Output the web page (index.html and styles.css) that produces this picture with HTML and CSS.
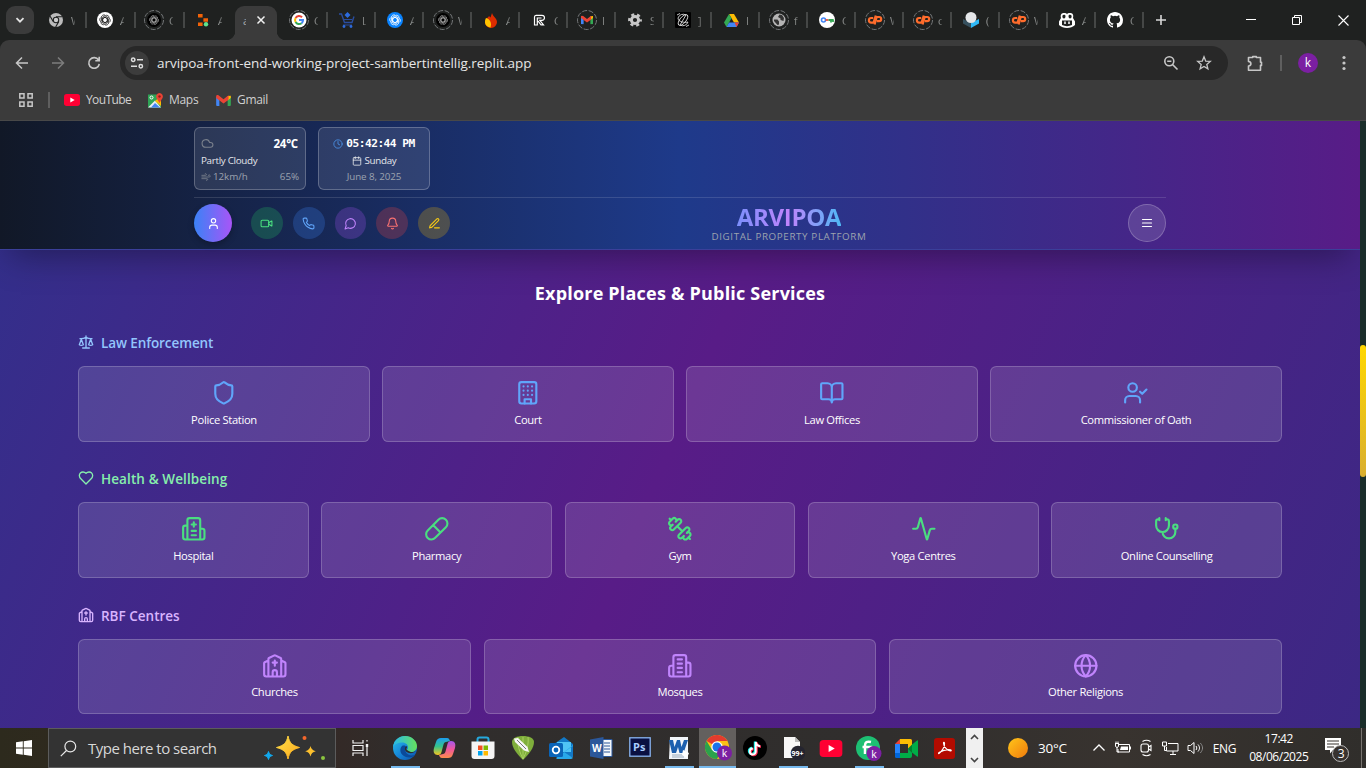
FILE: index.html
```html
<!DOCTYPE html>
<html lang="en">
<head>
<meta charset="utf-8">
<title>ARVIPOA</title>
<link rel="stylesheet" href="styles.css">
</head>
<body>
<svg class="defs" aria-hidden="true">
  <defs>
    <linearGradient id="g-edge" x1="0" y1="0" x2="1" y2="1"><stop offset="0" stop-color="#2cc3e8"/><stop offset=".5" stop-color="#1687d9"/><stop offset="1" stop-color="#0c4fa8"/></linearGradient>
    <linearGradient id="g-edge2" x1="0" y1="0" x2="1" y2="0"><stop offset="0" stop-color="#27b9ec"/><stop offset="1" stop-color="#66e05c"/></linearGradient>
    <linearGradient id="g-cop1" x1="0" y1="0" x2="0" y2="1"><stop offset="0" stop-color="#1c9df0"/><stop offset=".5" stop-color="#35c38b"/><stop offset="1" stop-color="#f6c51f"/></linearGradient>
    <linearGradient id="g-cop2" x1="0" y1="0" x2="0" y2="1"><stop offset="0" stop-color="#a557ee"/><stop offset=".5" stop-color="#f0579a"/><stop offset="1" stop-color="#fb8b4b"/></linearGradient>
    <linearGradient id="g-sun" x1="0" y1="0" x2="1" y2="1"><stop offset="0" stop-color="#ffc61a"/><stop offset="1" stop-color="#f07a0c"/></linearGradient>
    <linearGradient id="g-star" x1="0" y1="0" x2="1" y2="1"><stop offset="0" stop-color="#ffe04a"/><stop offset="1" stop-color="#fba91c"/></linearGradient>
  </defs>
  <symbol id="knot" viewBox="0 0 16 16"><g fill="none" stroke="currentColor" stroke-width=".9"><path id="petal" d="M8 4.900 10.700 6.450V11.200L7.500 13.050A2.900 2.900 0 0 1 3.200 10.600"/><path d="M8 4.900 10.700 6.450V11.200L7.500 13.050A2.900 2.900 0 0 1 3.200 10.600" transform="rotate(60 8 8)"/><path d="M8 4.900 10.700 6.450V11.200L7.500 13.050A2.900 2.900 0 0 1 3.200 10.600" transform="rotate(120 8 8)"/><path d="M8 4.900 10.700 6.450V11.200L7.500 13.050A2.900 2.900 0 0 1 3.200 10.600" transform="rotate(180 8 8)"/><path d="M8 4.900 10.700 6.450V11.200L7.500 13.050A2.900 2.900 0 0 1 3.200 10.600" transform="rotate(240 8 8)"/><path d="M8 4.900 10.700 6.450V11.200L7.500 13.050A2.900 2.900 0 0 1 3.200 10.600" transform="rotate(300 8 8)"/></g></symbol>
  <symbol id="gpt" viewBox="0 0 20 20"><circle cx="10" cy="10" r="9.5" fill="none" stroke="#75787a" stroke-dasharray="5 1.6"/><circle cx="10" cy="10" r="7" fill="#000"/><svg x="4" y="4" width="12" height="12" color="#aaa"><use href="#knot"/></svg></symbol>
  <symbol id="cp" viewBox="0 0 20 20"><circle cx="10" cy="10" r="9.5" fill="none" stroke="#75787a" stroke-dasharray="5 1.6"/><g fill="none" stroke="#ff6c2c" stroke-width="2.2"><path d="M8.200 8H6.200a2.200 2.200 0 0 0 0 4.600H8.600L10.800 5.500"/><path d="M9.600 14.500 11.700 7h2.400a2 2 0 0 1 0 4.200h-2.200"/></g></symbol>
  <symbol id="gmail" viewBox="0 0 16 12"><path d="M0 1.500V11a1 1 0 0 0 1 1h2.500V4.500z" fill="#4285f4"/><path d="M16 1.500V11a1 1 0 0 1-1 1h-2.500V4.500z" fill="#34a853"/><path d="M12.500 1 16 .8V3.400L12.500 6z" fill="#fbbc04"/><path d="M0 1.400C0 .2 1.500-.4 2.500.4L8 4.600 13.500.4v4.800L8 9.300 0 3.400z" fill="#ea4335"/></symbol>
  <symbol id="chrome" viewBox="0 0 24 24"><circle cx="12" cy="12" r="12" fill="#fbc116"/><path d="M12 12 1.600 6A12 12 0 0 1 22.400 6H12z" fill="#e33b2e"/><path d="M1.600 6A12 12 0 0 0 12 24L17 15 7 15z" fill="#2ba24c"/><circle cx="12" cy="12" r="5.700" fill="#fff"/><circle cx="12" cy="12" r="4.500" fill="#1a73e8"/></symbol>
  <symbol id="yt" viewBox="0 0 24 18"><rect width="24" height="18" rx="4" fill="#ff0033"/><path d="M9.500 5.300v7.400L16 9z" fill="#fff"/></symbol>
  <symbol id="building2" viewBox="0 0 24 24"><path d="M6 22V4a2 2 0 0 1 2-2h8a2 2 0 0 1 2 2v18ZM6 12H4a2 2 0 0 0-2 2v6a2 2 0 0 0 2 2h2M18 9h2a2 2 0 0 1 2 2v9a2 2 0 0 1-2 2h-2M10 6h4M10 10h4M10 14h4M10 18h4"/></symbol>
  <symbol id="church" viewBox="0 0 24 24"><path d="M10 9h4M12 7v5M14 22v-4a2 2 0 0 0-4 0v4M18 22V5.618a1 1 0 0 0-.553-.894l-4.553-2.277a2 2 0 0 0-1.788 0L6.553 4.724A1 1 0 0 0 6 5.618V22M18 7l3.447 1.724a1 1 0 0 1 .553.894V20a2 2 0 0 1-2 2H4a2 2 0 0 1-2-2V9.618a1 1 0 0 1 .553-.894L6 7"/></symbol>
</svg>

<div class="tabstrip">
  <div class="tab-search"><svg width="10" height="10" viewBox="0 0 10 10"><path d="M1.500 3.200 5 6.700 8.500 3.200" fill="none" stroke="#e3e3e3" stroke-width="1.800"/></svg></div>
  <div class="tabs early">
    <div class="tab"><svg class="fav" width="14" height="14" viewBox="0 0 16 16"><circle cx="8" cy="8" r="8" fill="#bbb"/><circle cx="8" cy="8" r="3.700" fill="#1f2120"/><circle cx="8" cy="8" r="2.500" fill="#ccc"/><path d="M8 4.300h7M4.800 9.800 1.300 3.800M11.200 9.800 7.600 16" stroke="#1f2120" stroke-width="1.300"/></svg><span>W</span></div>
    <div class="tab"><svg class="fav" width="16" height="16" viewBox="0 0 16 16"><circle cx="8" cy="8" r="8" fill="#fff"/><svg x="1" y="1" width="14" height="14" color="#222"><use href="#knot"/></svg></svg><span>A</span></div>
    <div class="tab"><svg class="fav big" width="20" height="20"><use href="#gpt"/></svg><span>C</span></div>
    <div class="tab last"><svg class="fav" width="12" height="14" viewBox="0 0 12 14"><path fill="#f26207" d="M1 1h4.600v3.600H1zM6.400 5.200H11v3.600H6.400zM1 9.400h4.600V13H1z"/><circle cx="9" cy="11.200" r="2.200" fill="#5fe38d"/></svg><span>A</span></div>
  </div>
  <div class="tab-active"><span>a</span><svg width="10" height="10" viewBox="0 0 10 10"><path d="m1.500 1.500 7 7m0-7-7 7" stroke="#f1f1f1" stroke-width="1.500"/></svg></div>
  <div class="tabs">
    <div class="tab"><svg class="fav big" width="20" height="20" viewBox="0 0 20 20"><circle cx="10" cy="10" r="9.500" fill="none" stroke="#75787a" stroke-dasharray="5 1.600"/><circle cx="10" cy="10" r="7.500" fill="#fff"/><g fill="none" stroke-width="2"><path d="M13 7.200A4 4 0 0 0 6.600 8" stroke="#ea4335"/><path d="M6.600 8a4 4 0 0 0 0 4" stroke="#fbbc05"/><path d="M6.600 12a4 4 0 0 0 6 1.200" stroke="#34a853"/><path d="M12.600 13.200A4 4 0 0 0 14 10h-4" stroke="#4285f4"/></g></svg><span>C</span></div>
    <div class="tab"><svg class="fav" width="16" height="16" viewBox="0 0 16 16"><path d="M0 2h2.500l3 8.500h7.500l2-6" fill="none" stroke="#2a4d9e" stroke-width="1.400"/><path d="m8.500 0 3 3-3 3-3-3z" fill="#2d6bdd"/><path d="M5 7.500h8M4 13h9" stroke="#2a4d9e"/><circle cx="5" cy="14.500" r="1.400" fill="#2d6bdd"/><circle cx="12" cy="14.500" r="1.400" fill="#2d6bdd"/></svg><span>L</span></div>
    <div class="tab"><svg class="fav" width="16" height="16" viewBox="0 0 16 16"><circle cx="8" cy="8" r="8" fill="#0a84ff"/><svg x="1" y="1" width="14" height="14" color="#fff"><use href="#knot"/></svg></svg><span>A</span></div>
    <div class="tab"><svg class="fav big" width="20" height="20"><use href="#gpt"/></svg><span>W</span></div>
    <div class="tab"><svg class="fav" width="12" height="15" viewBox="0 0 12 15"><path d="M7 0c1 4 5 5 5 9a5.800 5.800 0 0 1-12 0C0 6 3 5 4 3l1.500 1.500z" fill="#dd2c00"/><path d="M1 5c4 1 6 5 4.500 9.500A5.500 5.500 0 0 1 0 9.500C0 8 .3 6 1 5z" fill="#ffc400"/></svg><span>A</span></div>
    <div class="tab"><svg class="fav" width="12" height="12" viewBox="0 0 12 12"><path d="M3 1.300h6a2 2 0 0 1 0 5H6.800l3.700 4.600H8L5 7M1.500 3v8h2.800V3.500M1.500 3a1.700 1.700 0 0 1 1.500-1.700M4.500 4h4" fill="none" stroke="#fff" stroke-width="1.200"/></svg><span>C</span></div>
    <div class="tab"><svg class="fav big" width="20" height="20" viewBox="0 0 20 20"><circle cx="10" cy="10" r="9.500" fill="none" stroke="#75787a" stroke-dasharray="5 1.600"/><svg x="4" y="5.500" width="12" height="9"><use href="#gmail"/></svg></svg><span>I</span></div>
    <div class="tab"><svg class="fav" width="14" height="14" viewBox="0 0 14 14"><circle cx="7" cy="7" r="3.600" fill="none" stroke="#c7c7c7" stroke-width="3"/><circle cx="7" cy="7" r="5.700" fill="none" stroke="#c7c7c7" stroke-width="2.400" stroke-dasharray="3 2.970" stroke-dashoffset="1.500"/></svg><span>S</span></div>
    <div class="tab"><svg class="fav" width="16" height="16" viewBox="0 0 16 16"><rect width="16" height="16" rx="1" fill="#000"/><g fill="none" stroke="#ddd" stroke-width=".9"><ellipse cx="8" cy="8" rx="6.600" ry="3" transform="rotate(-50 8 8)"/><path d="M3 6a5.500 5.500 0 0 1 8-3L5 13M13 10a5.500 5.500 0 0 1-8 3M2 3l3-1.500M11 14.500l3-1.500M3 6c0 4 7 5 10 4"/></g></svg><span>]</span></div>
    <div class="tab"><svg class="fav" width="15" height="13" viewBox="0 0 15 13"><path d="M5 0h5l5 8.500h-5z" fill="#fbbc04"/><path d="M5 0 7.500 4.300 2.500 13 0 8.500z" fill="#34a853"/><path d="M5 8.500h10L12.500 13h-10z" fill="#4285f4"/><path d="M10.500 8.500H15L12.500 13z" fill="#ea4335"/></svg><span>I</span></div>
    <div class="tab"><svg class="fav big" width="20" height="20" viewBox="0 0 20 20"><circle cx="10" cy="10" r="9.500" fill="none" stroke="#75787a" stroke-dasharray="5 1.600"/><circle cx="10" cy="10" r="6.500" fill="#b5b5b5"/><path d="M5 9.500h3.500l1.500 2v3L8.500 15 5 11zM10.500 4.500 9 7l2.500 1.500V10l3 1 .5-3-2-3z" fill="#333"/></svg><span>f</span></div>
    <div class="tab"><svg class="fav" width="16" height="16" viewBox="0 0 16 16"><circle cx="8" cy="8" r="8" fill="#fff"/><circle cx="4.500" cy="8" r="2" fill="none" stroke="#4285f4" stroke-width="1.600"/><path d="M6.500 8h3" stroke="#ea4335" stroke-width="1.700"/><path d="M9.500 8H14M12 8v2.500M14 7.300V10" stroke="#34a853" stroke-width="1.800"/></svg><span>C</span></div>
    <div class="tab"><svg class="fav big" width="20" height="20"><use href="#cp"/></svg><span>W</span></div>
    <div class="tab"><svg class="fav big" width="20" height="20"><use href="#cp"/></svg><span>c</span></div>
    <div class="tab"><svg class="fav" width="16" height="16" viewBox="0 0 16 16"><path d="m0 7 8 4v5l-8-4.500z" fill="#36505e"/><path d="m16 7-8 4v5l8-4.500z" fill="#2fb9f7"/><circle cx="8" cy="5.500" r="5.500" fill="#e4e6e8"/></svg><span>(</span></div>
    <div class="tab"><svg class="fav big" width="20" height="20"><use href="#cp"/></svg><span>W</span></div>
    <div class="tab"><svg class="fav" width="16" height="15" viewBox="0 0 16 15"><path d="M2 5C1 1 3 0 5 0s3 .5 3 1.500C8 .5 9 0 11 0s4 1 3 5l2 3.500V12c-2 2-5 3-8 3s-6-1-8-3V8.500z" fill="#fff"/><path d="M3.500 2.500C4 1.500 6.500 1.500 6.500 3S6 5.500 5 5.500 3 4.500 3.500 2.500zM12.500 2.500C12 1.500 9.500 1.500 9.500 3S10 5.500 11 5.500s2-1 1.500-3zM3 7.500h10v4.500c-3 1.500-7 1.500-10 0z" fill="#1f2120"/><path d="M6 8.500v2.500M10 8.500v2.500" stroke="#fff" stroke-width="1.500"/></svg><span>A</span></div>
    <div class="tab"><svg class="fav" width="16" height="16" viewBox="0 0 16 16"><path fill="#fff" d="M8 0C3.580 0 0 3.580 0 8c0 3.540 2.290 6.530 5.470 7.590.4.070.55-.17.55-.38 0-.19-.01-.82-.01-1.490-2.010.37-2.530-.49-2.690-.94-.09-.23-.48-.94-.82-1.130-.28-.15-.68-.52-.01-.53.63-.01 1.080.58 1.230.82.72 1.210 1.870.87 2.330.66.070-.52.280-.87.510-1.070-1.780-.2-3.640-.89-3.640-3.950 0-.87.310-1.590.82-2.150-.08-.2-.36-1.020.08-2.120 0 0 .67-.21 2.200.82a7.400 7.400 0 0 1 4 0c1.530-1.040 2.200-.82 2.200-.82.44 1.100.16 1.920.08 2.120.51.56.82 1.270.82 2.150 0 3.070-1.870 3.750-3.650 3.950.29.25.54.73.54 1.480 0 1.070-.01 1.930-.01 2.200 0 .21.15.46.55.38A8.010 8.010 0 0 0 16 8c0-4.420-3.580-8-8-8z"/></svg><span>C</span></div>
  </div>
  <div class="newtab"><svg width="12" height="12" viewBox="0 0 12 12"><path d="M6 1v10M1 6h10" stroke="#d8d8d8" stroke-width="1.600"/></svg></div>
  <div class="wincontrols">
    <svg width="10" height="10" viewBox="0 0 10 10"><path d="M0 4.500h10" stroke="#fff"/></svg>
    <svg width="10" height="10" viewBox="0 0 10 10"><path d="M.5 2.500h7v7h-7zM2.500 2.500v-2h7v7h-2" fill="none" stroke="#fff"/></svg>
    <svg width="11" height="11" viewBox="0 0 11 11"><path d="m.5.5 10 10m0-10-10 10" stroke="#fff" stroke-width="1.100"/></svg>
  </div>
</div>

<div class="chrome-body">
  <div class="toolbar">
    <svg class="nav" width="14" height="14" viewBox="0 0 14 14"><path d="M7 1.500 1.500 7 7 12.500M1.500 7H13" fill="none" stroke="#c7c7c7" stroke-width="1.500"/></svg>
    <svg class="nav" width="14" height="14" viewBox="0 0 14 14"><path d="M7 1.500 12.500 7 7 12.500M12.500 7H1" fill="none" stroke="#7d7d7d" stroke-width="1.500"/></svg>
    <svg class="nav" width="14" height="14" viewBox="0 0 14 14"><path d="M11.500 4A5.300 5.300 0 1 0 12.300 8M12.200.8v4H8.300" fill="none" stroke="#c7c7c7" stroke-width="1.600"/></svg>
    <div class="omnibox">
      <div class="siteinfo"><svg width="14" height="14" viewBox="0 0 14 14"><g fill="none" stroke="#dedede" stroke-width="1.500"><circle cx="3.200" cy="3.700" r="1.700"/><path d="M7 3.700h6M1 10.300h6"/><circle cx="10.800" cy="10.300" r="1.700"/></g></svg></div>
      <span class="url">arvipoa-front-end-working-project-sambertintellig.replit.app</span>
      <svg class="zoomicon" width="16" height="16" viewBox="0 0 16 16"><g fill="none" stroke="#c7c7c7" stroke-width="1.600"><circle cx="6.300" cy="6.200" r="4.500"/><path d="m9.500 9.500 5 5M4.200 6.200h4.200"/></g></svg>
      <svg width="16" height="16" viewBox="0 0 16 16"><path d="m8 1.800 1.700 4.300 4.600.3-3.500 3 1.100 4.500L8 11.500l-3.900 2.400 1.100-4.500-3.500-3 4.600-.3z" fill="none" stroke="#c7c7c7" stroke-width="1.300"/></svg>
    </div>
    <svg class="ext" width="18" height="18" viewBox="0 0 18 18"><path d="M2.500 3.500h4.200V2.600h3.600v.9h4.200v4.700h1v3.200h-1v4.800h-12v-4.100c3.200-.5 3.200-4.200 0-4.700z" fill="none" stroke="#c7c7c7" stroke-width="1.600" stroke-linejoin="round"/></svg>
    <i class="tsep"></i>
    <span class="profile">k</span>
    <svg class="dots" width="4" height="16" viewBox="0 0 4 16"><g fill="#c7c7c7"><circle cx="2" cy="2.500" r="1.600"/><circle cx="2" cy="8" r="1.600"/><circle cx="2" cy="13.500" r="1.600"/></g></svg>
  </div>
  <div class="bookmarks">
    <svg width="14" height="14" viewBox="0 0 14 14"><path d="M.8.800h4.200v4.200H.8zM9 .800h4.200v4.200H9zM.8 9h4.200v4.200H.8zM9 9h4.200v4.200H9z" fill="none" stroke="#c7c7c7" stroke-width="1.500"/></svg>
    <i></i>
    <svg width="16" height="12"><use href="#yt"/></svg><span class="b1">YouTube</span>
    <svg width="15" height="15" viewBox="0 0 15 15"><rect y="1.500" width="13" height="13" fill="#2fa456"/><path d="m0 14.500 7-7 6 7z" fill="#e9edf3"/><path d="m3 14.500 4-4.500 5 4.500z" fill="#4285f4"/><path d="m7 8 6-5v10z" fill="#fbbc04"/><circle cx="3.500" cy="4.500" r="1.500" fill="none" stroke="#fff"/><path d="M11.500 0a3.500 3.500 0 0 1 3 5l-3 5-3-5a3.500 3.500 0 0 1 3-5z" fill="#ea4335"/><circle cx="11.500" cy="3.500" r="1.200" fill="#8c1d18"/></svg><span class="b2">Maps</span>
    <svg width="15" height="11"><use href="#gmail"/></svg><span class="b3">Gmail</span>
  </div>
</div>

<main class="viewport">
  <div class="app">
    <header class="app-header">
      <div class="header-inner">
        <div class="info-row">
          <div class="info weather">
            <div class="line"><svg class="lu dim" width="13" height="13" viewBox="0 0 24 24"><path d="M17.500 19H9a7 7 0 1 1 6.710-9h1.790a4.500 4.500 0 1 1 0 9Z"/></svg><b>24°C</b></div>
            <div class="line pc">Partly Cloudy</div>
            <div class="line dimtext"><span class="wind"><svg class="lu" width="10" height="10" viewBox="0 0 24 24"><path d="M12.800 19.600A2 2 0 1 0 14 16H2M17.500 8a2.500 2.500 0 1 1 2 4H2M9.800 4.400A2 2 0 1 1 11 8H2"/></svg>12km/h</span><span>65%</span></div>
          </div>
          <div class="info clock">
            <div class="line time"><svg class="lu blue" width="10" height="10" viewBox="0 0 24 24"><circle cx="12" cy="12" r="10"/><path d="M12 6v6l4 2"/></svg><b>05:42:44 PM</b></div>
            <div class="line day"><svg class="lu" width="10" height="10" viewBox="0 0 24 24"><path d="M8 2v4M16 2v4M3 10h18"/><rect x="3" y="4" width="18" height="18" rx="2"/></svg>Sunday</div>
            <div class="line dimtext date">June 8, 2025</div>
          </div>
        </div>
        <div class="main-row">
          <div class="actions">
            <span class="round avatar"><svg class="lu" width="13" height="13" viewBox="0 0 24 24"><path d="M19 21v-2a4 4 0 0 0-4-4H9a4 4 0 0 0-4 4v2"/><circle cx="12" cy="7" r="4"/></svg></span>
            <span class="round act green"><svg class="lu" width="13" height="13" viewBox="0 0 24 24"><path d="m16 13 5.223 3.482a.5.5 0 0 0 .777-.416V7.870a.5.5 0 0 0-.752-.432L16 10.500"/><rect x="2" y="6" width="14" height="12" rx="2"/></svg></span>
            <span class="round act blue"><svg class="lu" width="13" height="13" viewBox="0 0 24 24"><path d="M22 16.920v3a2 2 0 0 1-2.180 2 19.790 19.790 0 0 1-8.630-3.070 19.500 19.500 0 0 1-6-6 19.790 19.790 0 0 1-3.070-8.670A2 2 0 0 1 4.110 2h3a2 2 0 0 1 2 1.720c.13.960.36 1.900.7 2.810a2 2 0 0 1-.45 2.110L8.090 9.910a16 16 0 0 0 6 6l1.270-1.270a2 2 0 0 1 2.110-.45c.91.34 1.850.57 2.810.7A2 2 0 0 1 22 16.920z"/></svg></span>
            <span class="round act purple"><svg class="lu" width="13" height="13" viewBox="0 0 24 24"><path d="M7.900 20A9 9 0 1 0 4 16.100L2 22Z"/></svg></span>
            <span class="round act red"><svg class="lu" width="13" height="13" viewBox="0 0 24 24"><path d="M10.268 21a2 2 0 0 0 3.464 0M3.262 15.326A1 1 0 0 0 4 17h16a1 1 0 0 0 .74-1.673C19.410 13.956 18 12.499 18 8A6 6 0 0 0 6 8c0 4.499-1.411 5.956-2.738 7.326"/></svg></span>
            <span class="round act yellow"><svg class="lu" width="13" height="13" viewBox="0 0 24 24"><path d="M12 20h9M16.376 3.622a1 1 0 0 1 3.002 3.002L7.368 18.635a2 2 0 0 1-.855.506l-2.872.838a.5.5 0 0 1-.62-.62l.838-2.872a2 2 0 0 1 .506-.854z"/></svg></span>
          </div>
          <div class="brand"><h1>ARVIPOA</h1><p>DIGITAL PROPERTY PLATFORM</p></div>
          <span class="round menu"><svg class="lu" width="12" height="10" viewBox="0 0 12 10"><path d="M1.500 1.500h9M1.500 5h9M1.500 8.500h9" stroke-width="1.200"/></svg></span>
        </div>
      </div>
    </header>

    <div class="content">
      <h2>Explore Places &amp; Public Services</h2>

      <section class="law">
        <h3><svg class="lu" width="16" height="16" viewBox="0 0 24 24"><path d="m16 16 3-8 3 8c-.87.65-1.920 1-3 1s-2.130-.35-3-1ZM2 16l3-8 3 8c-.87.65-1.920 1-3 1s-2.130-.35-3-1ZM7 21h10M12 3v18M3 7h2c2 0 5-1 7-2 2 1 5 2 7 2h2"/></svg><span>Law Enforcement</span></h3>
        <div class="cards four">
          <div class="card"><svg class="lu" viewBox="0 0 24 24"><path d="M20 13c0 5-3.500 7.500-7.660 8.950a1 1 0 0 1-.67-.01C7.500 20.500 4 18 4 13V6a1 1 0 0 1 1-1c2 0 4.500-1.200 6.240-2.720a1.170 1.170 0 0 1 1.520 0C14.510 3.810 17 5 19 5a1 1 0 0 1 1 1z"/></svg><span>Police Station</span></div>
          <div class="card"><svg class="lu" viewBox="0 0 24 24"><rect x="4" y="2" width="16" height="20" rx="2"/><path d="M9 22v-4h6v4M8 6h.01M16 6h.01M12 6h.01M12 10h.01M12 14h.01M16 10h.01M16 14h.01M8 10h.01M8 14h.01"/></svg><span>Court</span></div>
          <div class="card"><svg class="lu" viewBox="0 0 24 24"><path d="M12 7v14M3 18a1 1 0 0 1-1-1V4a1 1 0 0 1 1-1h5a4 4 0 0 1 4 4 4 4 0 0 1 4-4h5a1 1 0 0 1 1 1v13a1 1 0 0 1-1 1h-6a3 3 0 0 0-3 3 3 3 0 0 0-3-3z"/></svg><span>Law Offices</span></div>
          <div class="card"><svg class="lu" viewBox="0 0 24 24"><path d="M16 21v-2a4 4 0 0 0-4-4H6a4 4 0 0 0-4 4v2M16 11l2 2 4-4"/><circle cx="9" cy="7" r="4"/></svg><span>Commissioner of Oath</span></div>
        </div>
      </section>

      <section class="health">
        <h3><svg class="lu" width="16" height="16" viewBox="0 0 24 24"><path d="M19 14c1.490-1.460 3-3.210 3-5.500A5.500 5.500 0 0 0 16.500 3c-1.760 0-3 .5-4.500 2-1.500-1.500-2.740-2-4.500-2A5.500 5.500 0 0 0 2 8.500c0 2.300 1.500 4.050 3 5.500l7 7Z"/></svg><span>Health &amp; Wellbeing</span></h3>
        <div class="cards five">
          <div class="card"><svg class="lu" viewBox="0 0 24 24"><path d="M12 6v4M14 14h-4M14 18h-4M14 8h-4M18 12h2a2 2 0 0 1 2 2v6a2 2 0 0 1-2 2H4a2 2 0 0 1-2-2v-9a2 2 0 0 1 2-2h2M18 22V4a2 2 0 0 0-2-2H8a2 2 0 0 0-2 2v18"/></svg><span>Hospital</span></div>
          <div class="card"><svg class="lu" viewBox="0 0 24 24"><path d="m10.500 20.500 10-10a4.950 4.950 0 1 0-7-7l-10 10a4.950 4.950 0 1 0 7 7ZM8.500 8.500l7 7"/></svg><span>Pharmacy</span></div>
          <div class="card"><svg class="lu" viewBox="0 0 24 24"><path d="M14.400 14.400 9.600 9.600M18.657 21.485a2 2 0 1 1-2.829-2.828l-1.767 1.768a2 2 0 1 1-2.829-2.829l6.364-6.364a2 2 0 1 1 2.829 2.829l-1.768 1.767a2 2 0 1 1 2.828 2.829zM21.500 21.500l-1.400-1.400M3.900 3.900 2.500 2.500M6.404 12.768a2 2 0 1 1-2.829-2.829l1.768-1.767a2 2 0 1 1-2.828-2.829l2.828-2.828a2 2 0 1 1 2.829 2.828l1.767-1.768a2 2 0 1 1 2.829 2.829z"/></svg><span>Gym</span></div>
          <div class="card"><svg class="lu" viewBox="0 0 24 24"><path d="M22 12h-2.480a2 2 0 0 0-1.930 1.460l-2.350 8.360a.25.25 0 0 1-.48 0L9.240 2.180a.25.25 0 0 0-.48 0l-2.350 8.360A2 2 0 0 1 4.490 12H2"/></svg><span>Yoga Centres</span></div>
          <div class="card"><svg class="lu" viewBox="0 0 24 24"><path d="M11 2v2M5 2v2M5 3H4a2 2 0 0 0-2 2v4a6 6 0 0 0 12 0V5a2 2 0 0 0-2-2h-1M8 15a6 6 0 0 0 12 0v-3"/><circle cx="20" cy="10" r="2"/></svg><span>Online Counselling</span></div>
        </div>
      </section>

      <section class="rbf">
        <h3><svg class="lu" width="16" height="16"><use href="#church"/></svg><span>RBF Centres</span></h3>
        <div class="cards three">
          <div class="card"><svg class="lu"><use href="#church"/></svg><span>Churches</span></div>
          <div class="card"><svg class="lu"><use href="#building2"/></svg><span>Mosques</span></div>
          <div class="card"><svg class="lu" viewBox="0 0 24 24"><circle cx="12" cy="12" r="10"/><path d="M12 2a14.500 14.500 0 0 0 0 20 14.500 14.500 0 0 0 0-20M2 12h20"/></svg><span>Other Religions</span></div>
        </div>
      </section>
    </div>
  </div>
  <div class="scrollbar"><i></i></div>
</main>

<footer class="taskbar">
  <div class="start"><svg width="16" height="16" viewBox="0 0 16 16"><path d="M0 2.200 6.800 1.300V7.600H0zM7.700 1.200 16 0v7.600H7.700zM0 8.400h6.800v6.300L0 13.800zM7.700 8.400H16V16l-8.300-1.200z" fill="#fff"/></svg></div>
  <div class="search"><svg width="17" height="17" viewBox="0 0 17 17"><circle cx="10.300" cy="6.500" r="5.400" fill="none" stroke="#e8e8e8" stroke-width="1.200"/><path d="M6.500 10.500.8 16.200" stroke="#e8e8e8" stroke-width="1.200"/></svg><span>Type here to search</span>
    <svg class="sparkles" width="62" height="26" viewBox="0 0 62 26"><path d="M24 1c1.500 7 4 9.500 11.500 11.500C28 14.500 25.500 17 24 24c-1.500-7-4-9.500-11.500-11.500C20 10.500 22.500 8 24 1z" fill="url(#g-star)" stroke="url(#g-star)" stroke-linejoin="round"/><path d="M46.500 11c.8 3 2 4.200 5.300 5.200-3.300 1-4.500 2.200-5.300 5.300-.8-3.100-2-4.300-5.300-5.300 3.300-1 4.500-2.200 5.300-5.200z" fill="#fcc02e"/><path d="M4.500 16.500c.7 2.500 1.500 3.300 4 4-2.500.7-3.300 1.500-4 4-.7-2.500-1.500-3.300-4-4 2.500-.7 3.300-1.500 4-4z" fill="#11a9ee" stroke="#11a9ee"/><circle cx="40.500" cy="3" r="2" fill="#f4672c"/><circle cx="59" cy="23" r="2" fill="#8bc53f"/></svg></div>
  <div class="taskview"><svg width="17" height="16" viewBox="0 0 17 16"><g fill="none" stroke="#f0f0f0" stroke-width="1.200"><path d="M1 0v3h10V0M1 16v-3h10v3M1 5.500h10v5H1zM15 4.500V16M15 0v1.500"/></g><rect x="13.800" y="4" width="2.400" height="3" fill="#f0f0f0"/></svg></div>
  <div class="apps">
    <div class="appicon on"><svg width="24" height="24" viewBox="0 0 24 24"><circle cx="12" cy="12" r="12" fill="url(#g-edge)"/><path d="M0 11C1 4 6 0 12 0c7 0 12 5 12 10 0 4-3 6-6 6-2 0-4-1-4-2 0-.6 1-1 1-2.500C15 9 13 6.500 9 6.500S1.500 8 0 11z" fill="url(#g-edge2)"/><path d="M9 10c-3 3-2 9 4 11 4 1.200 7 0 9-2-3 1-8 .6-9.500-3.500C12 13 13.500 12 14 11.500c-1-2-3.500-2.500-5-1.500z" fill="#0b4a9a"/><path d="M14 14c-1.500-1.500.5-2 0-4l-2 1.500c-.5 3 1 5 4 5.500 3 .5 6-.5 8-3-3 3-7 2.500-10 0z" fill="#302d2c"/></svg></div>
    <div class="appicon"><svg width="23" height="22" viewBox="0 0 23 22"><path d="M8 1h6c2 0 2.500 1.500 3 3l-4 1c-1.500 0-2 1-2.500 2.500L8.500 15C8 17 7 18 5 18 1 18 0 15 1 11l2-6C4 2 5.500 1 8 1z" fill="url(#g-cop1)"/><path d="M15 21H9c-2 0-2.500-1.500-3-3l4-1c1.500 0 2-1 2.500-2.500L14.500 7c.5-2 1.500-3 3.500-3 4 0 5 3 4 7l-2 6c-1 3-2.500 4-5 4z" fill="url(#g-cop2)"/></svg></div>
    <div class="appicon"><svg width="24" height="24" viewBox="0 0 24 24"><path d="M6.500 7V3.500a2 2 0 0 1 2-2h7a2 2 0 0 1 2 2V7" fill="none" stroke="#25a9dd" stroke-width="2"/><path d="M.5 5.500h23V20a3 3 0 0 1-3 3h-17a3 3 0 0 1-3-3z" fill="#f5f5f5"/><path d="M7 9.500h4.500V14H7z" fill="#f25022"/><path d="M12.500 9.500H17V14h-4.500z" fill="#7fba00"/><path d="M7 15h4.500v4.500H7z" fill="#00a4ef"/><path d="M12.500 15H17v4.500h-4.500z" fill="#ffb900"/></svg></div>
    <div class="appicon"><svg width="24" height="24" viewBox="0 0 24 24"><path d="M1 6C1 2 6 0 12 0s11 2 11 6c0 6-5 12-11 18C6 18 1 12 1 6z" fill="#7fae3b"/><path d="M12 1v22M7 1c-1 8 2 16 5 22M17 1c1 8-2 16-5 22" stroke="#a9d060" fill="none"/><path d="M3 2.500 7 2l9.500 9 1.500 5-5-1.500L4 6z" fill="#f6f6f6"/><path d="m6 4 9 9" stroke="#777"/></svg></div>
    <div class="appicon"><svg width="25" height="24" viewBox="0 0 25 24"><path d="m5 8 10-7 9 7v13H5z" fill="#1278c6"/><path d="M8 6h14v10H8z" fill="#50c4f5"/><path d="m24 9-9 7 9 6zM7 22l17-12v11a2 2 0 0 1-2 2H8z" fill="#28a8ea"/><rect y="7" width="14" height="14" rx="1.500" fill="#0a64b8"/><circle cx="7" cy="14" r="3.300" fill="none" stroke="#fff" stroke-width="1.800"/></svg></div>
    <div class="appicon"><svg width="23" height="22" viewBox="0 0 23 22"><path d="M12 2.500h10v17H12z" fill="#f4f7fb" stroke="#2b579a"/><path d="M14 6h6M14 9h6M14 12h6M14 15h6" stroke="#2b579a"/><path d="m0 2.500 13.500-2.500v22L0 19.500z" fill="#2b579a"/><text x="2" y="14.500" class="glyph" font-size="10" fill="#fff">W</text></svg></div>
    <div class="appicon"><svg class="raise" width="22" height="20" viewBox="0 0 22 20"><rect x=".8" y=".8" width="20.400" height="18.400" fill="#0a1042" stroke="#8ab6f2" stroke-width="1.300"/><text x="4" y="14" class="glyph" font-size="11" fill="#a9cdff">Ps</text></svg></div>
    <div class="appicon on word2"><svg width="22" height="23" viewBox="0 0 22 23"><path d="M2 0h18v22H1z" fill="#f1f5fa"/><path d="M4 18h12M4 20h12" stroke="#9ab"/><path d="M1 3h4l1.500 7L9 3h3l1.500 7L16 3h4l-4.500 13h-4L10 10l-2 6H4z" fill="#1c5fae"/><path d="m15 13 6 3-2 5-5-3z" fill="#fff"/></svg></div>
    <div class="appicon on current"><svg width="28" height="26" viewBox="0 0 28 26"><svg width="24" height="24"><use href="#chrome"/></svg><circle cx="19.500" cy="18" r="7.500" fill="#7b1fa2"/><text x="16.800" y="22" class="glyph light" font-size="10.500" fill="#fff">k</text></svg></div>
    <div class="appicon"><svg width="24" height="24" viewBox="0 0 24 24"><circle cx="12" cy="12" r="12" fill="#000"/><g fill="none" stroke-width="2.400"><path d="M12 5.500v9.500a3 3 0 1 1-3-3M12 5.500c.5 3 2 4 4.300 4.200" stroke="#25f4ee"/><path d="M13.600 6.500V16a3 3 0 1 1-3-3M13.600 6.500c.5 3 2 4 4.300 4.200" stroke="#fe2c55"/><path d="M12.800 6v9.500a3 3 0 1 1-3-3M12.800 6c.5 3 2 4 4.300 4.200" stroke="#fff" stroke-width="1.800"/></g></svg></div>
    <div class="appicon on"><svg width="24" height="24" viewBox="0 0 24 24"><path d="M3 1h11l5 5v16H3z" fill="#f7f7f7"/><path d="M14 1v5h5z" fill="#bbb"/><circle cx="17" cy="17" r="7.300" fill="#24242f"/><text x="10.500" y="20" class="glyph" font-size="7" fill="#fff">99+</text></svg></div>
    <div class="appicon"><svg width="24" height="17"><use href="#yt"/></svg></div>
    <div class="appicon on"><svg width="26" height="25" viewBox="0 0 26 25"><circle cx="12" cy="12" r="12" fill="#1dbf73"/><path d="M15 6c-4-1-6 0-6 3.500V18M6.500 11H15v7" fill="none" stroke="#fff" stroke-width="2.500"/><circle cx="18" cy="17.500" r="7.500" fill="#7b1fa2"/><text x="15.300" y="21.500" class="glyph light" font-size="10.500" fill="#fff">k</text></svg></div>
    <div class="appicon"><svg width="23" height="19" viewBox="0 0 23 19"><path d="M5 0h10.500A1.500 1.500 0 0 1 17 1.500V8l-4 2V5H5z" fill="#fbbc04"/><path d="M0 5 5 0v5z" fill="#ea4335"/><path d="M0 5h5v9H0z" fill="#2684fc"/><path d="M0 14h5v5H1.500A1.500 1.500 0 0 1 0 17.500z" fill="#0066da"/><path d="M5 14h8V9.500l4 4V17a2 2 0 0 1-2 2H5z" fill="#00ac47"/><path d="m17 5.500-4 4 4 4z" fill="#00832d"/><path d="m17 5.500 5-4c.5-.4 1 0 1 .5v15c0 .5-.5 1-1 .5l-5-4z" fill="#00ac47"/></svg></div>
    <div class="appicon"><svg width="21" height="21" viewBox="0 0 21 21"><rect width="21" height="21" rx="3" fill="#b30b00"/><path d="M5 15.500c3-2 6-7 5.500-10.500-.2-1-1-1-1 0 .2 4 4 7.500 7 8 1 0 1-1 0-1.200-3-.4-8 .7-11 2.500-1 .6-1.300 1.500-.5 1.200z" fill="none" stroke="#fff" stroke-width="1.200"/></svg></div>
  </div>
  <div class="overflow"><svg width="9" height="6" viewBox="0 0 9 6"><path d="M1 5 4.500 1.500 8 5" fill="none" stroke="#444" stroke-width="1.600"/></svg><svg width="9" height="6" viewBox="0 0 9 6"><path d="M1 1 4.500 4.500 8 1" fill="none" stroke="#444" stroke-width="1.600"/></svg></div>
  <div class="temp"><svg width="20" height="20"><circle cx="10" cy="10" r="10" fill="url(#g-sun)"/></svg><span>30°C</span></div>
  <div class="tray">
    <svg width="14" height="16" viewBox="0 0 14 16"><path d="m1.500 10.500 5.500-5.500 5.500 5.500" fill="none" stroke="#fff" stroke-width="1.300"/></svg>
    <svg width="17" height="16" viewBox="0 0 17 16"><path d="M5 4.500h10.500v7.500H4V9" fill="none" stroke="#fff"/><path d="M7 6.500h7v3.500H6zM15.500 6.500H17v3h-1.500z" fill="#fff"/><path d="M1 3.500h4M1.500 3.500v3l1.500 1 1.500-1v-3M2 1.500v2M4 1.500v2M3 7v5h2" fill="none" stroke="#fff"/></svg>
    <svg width="14" height="18" viewBox="0 0 14 18"><g fill="none" stroke="#fff" stroke-width="1.100"><rect x="2" y="5" width="7.500" height="8" rx="2"/><path d="m9.500 8 2.500-1.500v5L9.500 10M3.500 2.500c2.500-1.500 5.500-1.500 8 0M3.500 15.500c2.500 1.500 5.500 1.500 8 0"/></g></svg>
    <svg width="17" height="16" viewBox="0 0 17 16"><path d="M6 3.500h10v7.500H4.500V7M8 14.500h6M11 11v3.500M.5 2h4v4h-4zM2.500 6v4.500h2" fill="none" stroke="#fff"/></svg>
    <svg width="17" height="16" viewBox="0 0 17 16"><g fill="none" stroke="#fff"><path d="M1 5.500h2.500L7 2.500v11L3.500 10.500H1z"/><path d="M9 6c1 1.500 1 2.500 0 4M11 4.500c2 2.500 2 4.500 0 7"/><path d="M13.300 3c3 3.500 3 6.500 0 10" stroke="#888"/></g></svg>
  </div>
  <span class="lang">ENG</span>
  <div class="datetime"><span class="t">17:42</span><span class="d">08/06/2025</span></div>
  <div class="notif"><svg width="26" height="26" viewBox="0 0 26 26"><path d="M1 2h16v12H9l-3 3.500V14H1z" fill="#fff"/><path d="M3 5h12M3 8h12M3 11h7" stroke="#37322f" stroke-width="1.200"/><circle cx="16.500" cy="17.500" r="8" fill="#37322f" stroke="#bbb"/><text x="13.700" y="22" class="glyph light" font-size="12" fill="#fff">3</text></svg></div>
  <i class="peek"></i>
</footer>
</body>
</html>
```
FILE: styles.css
```css
* { box-sizing: border-box; }
body { margin: 0; width: 1366px; height: 768px; overflow: hidden; display: flex; flex-direction: column; font-family: "Open Sans", "Noto Sans", sans-serif; background: #1f2120; }
svg { display: block; flex: none; }
.defs { position: absolute; width: 0; height: 0; }
h1, h2, h3, p { margin: 0; }
.glyph { font-family: "Open Sans", sans-serif; font-weight: 700; }
.glyph.light { font-weight: 500; }

/* Tab strip */
.tabstrip { height: 40px; display: flex; align-items: center; background: #1f2120; flex: none; }
.tab-search { width: 28px; height: 28px; margin-left: 6px; margin-right: 4px; border-radius: 9px; background: #3b3b3b; display: flex; align-items: center; justify-content: center; }
.tabs { display: flex; height: 40px; }
.tab { width: 48px; height: 40px; position: relative; padding-left: 9px; display: grid; grid-template-columns: 20px 4px; align-items: center; justify-items: center; column-gap: 5px; }
.early .tab { width: 49px; padding-left: 8px; }
.tab::after { content: ""; position: absolute; right: 0; top: 12px; width: 2px; height: 16px; background: #454746; }
.tab.last::after { display: none; }
.tab span { width: 4px; overflow: hidden; font-size: 11px; color: #a9acab; justify-self: start; -webkit-mask-image: linear-gradient(90deg, #000, rgba(0,0,0,.3)); mask-image: linear-gradient(90deg, #000, rgba(0,0,0,.3)); }
.tab-active { width: 42px; height: 34px; margin: 6px 3px 0 1px; border-radius: 9px 9px 0 0; background: #3b3b3b; display: flex; align-items: center; padding: 0 0 6px 8px; gap: 10px; position: relative; }
.tab-active span { width: 3px; overflow: hidden; color: #aaa; font-size: 11px; }
.tab-active::before, .tab-active::after { content: ""; position: absolute; bottom: 0; width: 9px; height: 9px; }
.tab-active::before { left: -9px; background: radial-gradient(circle at 0 0, transparent 9px, #3b3b3b 9.5px); }
.tab-active::after { right: -9px; background: radial-gradient(circle at 100% 0, transparent 9px, #3b3b3b 9.5px); }
.newtab { margin-left: 11px; }
.wincontrols { margin-left: auto; margin-right: 17px; display: flex; gap: 36px; align-items: center; }

/* Toolbar */
.chrome-body { height: 81px; flex: none; background: #3b3b3b; border-radius: 9px 9px 0 0; border-bottom: 1px solid #484848; }
.toolbar { height: 46px; display: flex; align-items: center; padding-left: 15px; }
.nav { margin-right: 22px; }
.omnibox { width: 1108px; height: 34px; margin-left: -3px; border-radius: 17px; background: #282828; display: flex; align-items: center; padding: 0 16px 0 5px; }
.siteinfo { width: 24px; height: 24px; border-radius: 50%; background: #3c3c3c; display: flex; align-items: center; justify-content: center; }
.url { margin-left: 8px; flex: 1; font-size: 13.5px; letter-spacing: -.04px; color: #e6e6e6; white-space: nowrap; }
.zoomicon { margin-right: 17px; }
.ext { margin-left: 18px; }
.tsep { width: 2px; height: 16px; margin: 0 16px; background: #5f5f5f; }
.profile { width: 20px; height: 20px; border-radius: 50%; background: #7b1fa2; color: #fff; font-size: 12px; line-height: 19px; text-align: center; }
.dots { margin-left: 24px; }
.bookmarks { height: 28px; display: flex; align-items: center; padding-left: 19px; font-size: 12px; color: #d0d0d0; }
.bookmarks i { width: 2px; height: 16px; margin: 0 14px 0 15px; background: #5f5f5f; }
.bookmarks span { margin-left: 6px; margin-top: -1px; white-space: nowrap; letter-spacing: -.3px; }
.bookmarks .b1 { width: 62px; letter-spacing: -.6px; }
.b2 { width: 47px; }

/* Page */
.viewport { height: 607px; flex: none; display: flex; }
.app { width: 1360px; overflow: hidden; background: linear-gradient(113deg, #31308b 0%, #581c87 50%, #3c2884 100%); }
.scrollbar { width: 6px; background: #1a2e2a; padding-top: 224px; }
.scrollbar i { display: block; height: 132px; border-radius: 3px; background: linear-gradient(#ffd700, #d9ae2f); }
.lu { fill: none; stroke: currentColor; stroke-width: 2; stroke-linecap: round; stroke-linejoin: round; }

.app-header { height: 129px; background: linear-gradient(90deg, #111827, #1e3a8a 50%, #581c87); border-bottom: 1px solid #3b3f9a; box-shadow: 0 16px 32px -10px rgba(0,0,0,.35); }
.header-inner { width: 972px; margin: 0 auto; padding-top: 6px; }
.info-row { display: flex; gap: 12px; height: 71px; border-bottom: 1px solid rgba(255,255,255,.13); }
.info { width: 112px; height: 63px; border: 1px solid rgba(255,255,255,.24); border-radius: 6px; background: rgba(255,255,255,.1); padding: 7px 6px 0; color: #e5e7eb; }
.line { display: flex; align-items: center; justify-content: space-between; height: 17px; font-size: 9.8px; letter-spacing: -.2px; }
.line b { font-size: 11.5px; color: #fff; letter-spacing: -.2px; margin-top: -1px; }
.weather .line:first-child { padding: 0 1px 0 0; }
.pc { letter-spacing: -.3px; font-weight: 500; }
.dim { color: #7a808c; }
.dimtext { color: #9ca3af; height: 15px; }
.weather .dimtext { letter-spacing: -.05px; }
.wind { display: flex; align-items: center; gap: 2px; }
.wind svg { color: #7a808c; }
.clock .line { justify-content: center; gap: 3px; }
.clock .day { font-weight: 500; letter-spacing: -.3px; }
.clock .date { letter-spacing: -.1px; }
.clock .time b { font: 700 11.2px "DejaVu Sans Mono", monospace; letter-spacing: -.5px; }
.clock .blue { color: #4b93e8; }
.main-row { height: 50px; display: flex; align-items: center; justify-content: space-between; }
.actions { display: flex; align-items: center; gap: 10px; }
.round { border-radius: 50%; display: flex; align-items: center; justify-content: center; }
.avatar { width: 38px; height: 38px; margin-right: 9px; color: #fff; background: linear-gradient(90deg, #3b82f6, #a855f7); box-shadow: 0 3px 6px rgba(0,0,0,.25); }
.act { width: 31.8px; height: 32px; }
.act.green { background: rgba(34,197,94,.25); color: #4ade80; }
.act.blue { background: rgba(59,130,246,.25); color: #60a5fa; }
.act.purple { background: rgba(168,85,247,.25); color: #c084fc; }
.act.red { background: rgba(239,68,68,.25); color: #f87171; }
.act.yellow { background: rgba(234,179,8,.25); color: #facc15; }
.menu { width: 38px; height: 38px; background: rgba(255,255,255,.13); border: 1px solid rgba(255,255,255,.22); color: #fff; }
.brand { width: 154px; display: flex; flex-direction: column; align-items: center; padding-top: 1px; }
.brand h1 { font-size: 24px; line-height: 26px; font-weight: 700; letter-spacing: -.3px; background: linear-gradient(90deg, #7c8ffc, #c084fc 50%, #4fb8f5); -webkit-background-clip: text; background-clip: text; color: transparent; }
.brand p { font-size: 9.8px; line-height: 14px; letter-spacing: .62px; color: #9ca3af; white-space: nowrap; }

.content { padding: 31px 78px 0; }
h2 { height: 24px; font-size: 18px; line-height: 24px; text-align: center; color: #fff; letter-spacing: .2px; }
section { margin-top: 25.3px; height: 111px; }
.content h2 + section { margin-top: 26px; }
h3 { display: flex; align-items: center; gap: 7px; height: 24px; margin-bottom: 11px; font-size: 13.5px; font-weight: 600; }
h3 svg { margin-top: -2px; }
.law h3 { letter-spacing: -.1px; }
.health h3 { letter-spacing: .1px; }
.cards { display: grid; gap: 12.7px; }
.four { grid-template-columns: repeat(4, 1fr); gap: 12px; }
.five { grid-template-columns: repeat(5, 1fr); }
.three { grid-template-columns: repeat(3, 1fr); }
.card { height: 75.5px; border: 1px solid rgba(255,255,255,.2); border-radius: 6.4px; background: rgba(255,255,255,.12); display: flex; flex-direction: column; align-items: center; padding-top: 13px; }
.card svg { width: 25.6px; height: 25.6px; }
.card span { margin-top: 6px; font-size: 11.2px; line-height: 16px; font-weight: 500; color: #fff; letter-spacing: -.33px; }
.law h3 { color: #93c5fd; } .law .card { color: #60a5fa; }
.health h3 { color: #86efac; } .health .card { color: #4ade80; }
.rbf h3 { color: #d8b4fe; } .rbf .card { color: #c084fc; }

/* Taskbar */
.taskbar { height: 40px; flex: none; display: flex; align-items: center; background: linear-gradient(90deg, #2d2a1d, #352824 22%, #302d2c 30%, #302e2d 65%, #38332f 82%, #302e2b); color: #fff; }
.start { width: 48px; display: flex; justify-content: center; }
.search { width: 288px; height: 40px; border: 1px solid #5c5c5c; background: #333; display: flex; align-items: center; padding-left: 11px; color: #d8d8d8; font-size: 15px; }
.search span { margin-left: 11px; width: 150px; white-space: nowrap; letter-spacing: -.5px; }
.sparkles { margin-left: 26px; }
.taskview { width: 49.5px; display: flex; justify-content: center; }
.apps { display: grid; grid-template-columns: repeat(7, 39.2px) repeat(8, 38px); width: 580.5px; height: 40px; }
.appicon { display: flex; align-items: center; justify-content: center; height: 40px; position: relative; }
.appicon.on::after { content: ""; position: absolute; bottom: 0; left: 5px; width: 29px; height: 2px; background: #76b9ed; }
.appicon.current { background: #63605e; margin: 0 0 0 1px; padding-left: 4px; }
.appicon.current::after { left: 0; width: 100%; }
.raise { margin-bottom: 3px; }
.overflow { width: 17px; height: 40px; background: #f0f0f0; display: flex; flex-direction: column; align-items: center; justify-content: space-between; padding: 6px 0 5px; }
.temp { margin-left: 25px; width: 84px; display: flex; align-items: center; gap: 10px; font-size: 13.5px; letter-spacing: -.25px; }
.tray { display: flex; align-items: center; gap: 8.2px; }
.lang { margin-left: 9px; width: 25px; font-size: 12px; letter-spacing: -.3px; }
.datetime { margin-left: 10px; width: 62px; display: flex; flex-direction: column; align-items: center; font-size: 12px; line-height: 18px; letter-spacing: -.45px; white-space: nowrap; }
.notif { margin-left: 14px; margin-top: 2px; }
.peek { margin-left: auto; margin-right: 4px; width: 1px; height: 40px; background: #77736f; }
```
